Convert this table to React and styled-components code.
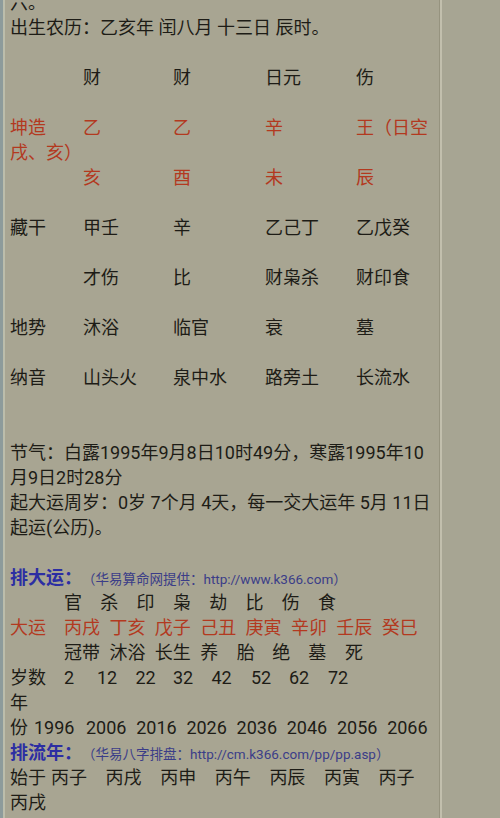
import React from 'react'
import styled, { createGlobalStyle } from 'styled-components'

const ink = '#1d1c16'
const red = '#b3391f'
const blue = '#2c2ea3'
const note = '#3b3d88'

const GlobalStyle = createGlobalStyle`
  html, body {
    margin: 0;
    padding: 0;
    background: #a8a592;
    overflow: hidden;
  }
  body {
    font-family: Roboto, "Noto Sans CJK SC", sans-serif;
    font-size: 18px;
    color: ${ink};
  }
`

const Page = styled.div`
  display: flex;
  margin-top: -10px;
  min-height: 840px;
  background: #a8a592;
`

const LeftStrip = styled.div`
  flex: 0 0 6px;
  background: linear-gradient(
    to right,
    #8d9b9b 0 3px,
    #bcbdab 3px 5px,
    #a8a592 5px
  );
`

const Content = styled.div`
  flex: 0 0 433px;
  box-sizing: border-box;
  padding-left: 4px;
`

const Divider = styled.div`
  flex: 0 0 2px;
  border-left: 1px solid #96937f;
  background: #c2bfad;
`

const RightPane = styled.div`
  flex: 1;
  background: #a7a593;
`

const Line = styled.div`
  height: 25px;
  line-height: 25px;
  white-space: nowrap;
  color: ${(p) => p.$color || ink};
  margin-top: ${(p) => (p.$skip || 0) * 25}px;
`

const TableRow = styled.div`
  display: grid;
  grid-template-columns: 73px 90px 92px 91px auto;
  height: 25px;
  line-height: 25px;
  white-space: nowrap;
  color: ${(p) => p.$color || ink};
  margin-top: ${(p) => (p.$skip || 0) * 25}px;
`

const Heading = styled.div`
  display: flex;
  align-items: baseline;
  height: 25px;
  line-height: 25px;
  white-space: nowrap;
  margin-top: ${(p) => (p.$skip || 0) * 25}px;
`

const HeadTitle = styled.span`
  font-weight: bold;
  color: ${blue};
`

const HeadNote = styled.span`
  font-size: 13.5px;
  color: ${note};
`

const SeqRow = styled.div`
  display: flex;
  height: 25px;
  line-height: 25px;
  white-space: nowrap;
  color: ${(p) => p.$color || ink};
`

const SeqLabel = styled.span`
  flex: 0 0 ${(p) => p.$w}px;
`

const SeqCell = styled.span`
  flex: 0 0 ${(p) => p.$w}px;
`

const lowerRows = [
  { label: '藏干', cells: ['甲壬', '辛', '乙己丁', '乙戊癸'], skip: 1 },
  { label: '', cells: ['才伤', '比', '财枭杀', '财印食'], skip: 1 },
  { label: '地势', cells: ['沐浴', '临官', '衰', '墓'], skip: 1 },
  { label: '纳音', cells: ['山头火', '泉中水', '路旁土', '长流水'], skip: 1 },
]

const Table = ({ label, cells, skip, color }) => (
  <TableRow $skip={skip} $color={color}>
    <span>{label}</span>
    {cells.map((c, i) => (
      <span key={i}>{c}</span>
    ))}
  </TableRow>
)

const Seq = ({ label, labelW = 54, items, color }) => (
  <SeqRow $color={color}>
    <SeqLabel $w={labelW}>{label}</SeqLabel>
    {items.map(([text, w], i) => (
      <SeqCell key={i} $w={w}>
        {text}
      </SeqCell>
    ))}
  </SeqRow>
)

const gods = '官杀印枭劫比伤食'.split('').map((t) => [t, 36.3])
const luck = ['丙戌', '丁亥', '戊子', '己丑', '庚寅', '辛卯', '壬辰', '癸巳'].map((t) => [t, 45.4])
const stages = [
  ['冠带', 45.4],
  ['沐浴', 45.4],
  ['长生', 45.4],
  ['养', 36.6],
  ['胎', 35.6],
  ['绝', 36],
  ['墓', 36.6],
  ['死', 36],
]
const ages = [
  ['2', 33],
  ['12', 38.5],
  ['22', 37.5],
  ['32', 38.5],
  ['42', 39.5],
  ['52', 38],
  ['62', 39],
  ['72', 30],
]
const years = ['1996', '2006', '2016', '2026', '2036', '2046', '2056', '2066'].map((t, i) => [
  t,
  i === 0 ? 52 : 50.2,
])
const flowYears = ['丙子', '丙戌', '丙申', '丙午', '丙辰', '丙寅', '丙子'].map((t) => [t, 54.6])

const App = () => {
  return (
    <>
      <GlobalStyle />
      <Page>
        <LeftStrip />
        <Content>
          <Line>六。</Line>
          <Line>出生农历：乙亥年 闰八月 十三日 辰时。</Line>

          <Table label="" cells={['财', '财', '日元', '伤']} skip={1} />
          <Table label="坤造" cells={['乙', '乙', '辛', '王（日空']} skip={1} color={red} />
          <Line $color={red}>戌、亥）</Line>
          <Table label="" cells={['亥', '酉', '未', '辰']} color={red} />
          {lowerRows.map((r, i) => (
            <Table key={i} {...r} />
          ))}

          <Line $skip={2}>节气：白露1995年9月8日10时49分，寒露1995年10</Line>
          <Line>月9日2时28分</Line>
          <Line>起大运周岁：0岁 7个月 4天，每一交大运年 5月 11日</Line>
          <Line>起运(公历)。</Line>

          <Heading $skip={1}>
            <HeadTitle>排大运：</HeadTitle>
            <HeadNote>（华易算命网提供：http://www.k366.com）</HeadNote>
          </Heading>
          <Seq label="" items={gods} />
          <Seq label="大运" items={luck} color={red} />
          <Seq label="" items={stages} />
          <Seq label="岁数" items={ages} />
          <Line>年</Line>
          <Seq label="份" labelW={24} items={years} />
          <Heading>
            <HeadTitle>排流年：</HeadTitle>
            <HeadNote>（华易八字排盘：http://cm.k366.com/pp/pp.asp）</HeadNote>
          </Heading>
          <Seq label="始于" labelW={41} items={flowYears} />
          <Line>丙戌</Line>
        </Content>
        <Divider />
        <RightPane />
      </Page>
    </>
  )
}

export default App
